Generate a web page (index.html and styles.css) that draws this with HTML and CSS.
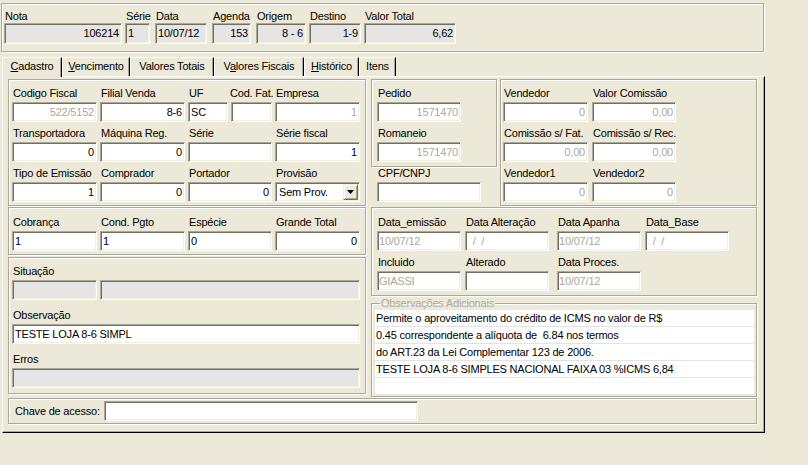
FILE: index.html
```html
<!DOCTYPE html>
<html>
<head>
<meta charset="utf-8">
<title>Nota</title>
<link rel="stylesheet" href="styles.css">
</head>
<body>
<div class="hdr">
  <div class="hf hw-nota"><div class="lbl">Nota</div><div class="inp hinp gray r">106214</div></div>
  <div class="hf hw-serie"><div class="lbl">Série</div><div class="inp hinp gray">1</div></div>
  <div class="hf hw-data"><div class="lbl">Data</div><div class="inp hinp gray">10/07/12</div></div>
  <div class="hf hw-agenda"><div class="lbl">Agenda</div><div class="inp hinp gray r">153</div></div>
  <div class="hf hw-origem"><div class="lbl">Origem</div><div class="inp hinp gray r">8 - 6</div></div>
  <div class="hf hw-destino"><div class="lbl">Destino</div><div class="inp hinp gray r">1-9</div></div>
  <div class="hf hw-valor"><div class="lbl">Valor Total</div><div class="inp hinp gray r">6,62</div></div>
</div>

<div class="tabs">
  <div class="tab sel t-cad"><u>C</u>adastro</div>
  <div class="tab t-ven"><u>V</u>encimento</div>
  <div class="tab t-vt">Valores Totais</div>
  <div class="tab t-vf">V<u>a</u>lores Fiscais</div>
  <div class="tab t-his"><u>H</u>istórico</div>
  <div class="tab t-itens">Itens</div>
</div>

<div class="panel">
  <div class="cols">
    <div class="lcol">
      <div class="grp ga">
        <div class="g4">
          <div class="f"><div class="lbl">Codigo Fiscal</div><div class="inp dis r">522/5152</div></div>
          <div class="f"><div class="lbl">Filial Venda</div><div class="inp r">8-6</div></div>
          <div class="split">
            <div class="f"><div class="lbl">UF</div><div class="inp">SC</div></div>
            <div class="f"><div class="lbl lbl-fat">Cod. Fat.</div><div class="inp"></div></div>
          </div>
          <div class="f"><div class="lbl">Empresa</div><div class="inp dis r">1</div></div>

          <div class="f"><div class="lbl">Transportadora</div><div class="inp r">0</div></div>
          <div class="f"><div class="lbl">Máquina Reg.</div><div class="inp r">0</div></div>
          <div class="f"><div class="lbl">Série</div><div class="inp"></div></div>
          <div class="f"><div class="lbl">Série fiscal</div><div class="inp r">1</div></div>

          <div class="f"><div class="lbl">Tipo de Emissão</div><div class="inp r">1</div></div>
          <div class="f"><div class="lbl">Comprador</div><div class="inp r">0</div></div>
          <div class="f"><div class="lbl">Portador</div><div class="inp r">0</div></div>
          <div class="f"><div class="lbl">Provisão</div>
            <div class="inp combo"><span class="ctext">Sem Prov.</span><span class="cbtn"><svg width="7" height="4" viewBox="0 0 7 4"><polygon points="0,0 7,0 3.5,4" fill="#000"/></svg></span></div>
          </div>
        </div>
      </div>

      <div class="grp gb">
        <div class="g4">
          <div class="f"><div class="lbl">Cobrança</div><div class="inp">1</div></div>
          <div class="f"><div class="lbl">Cond. Pgto</div><div class="inp">1</div></div>
          <div class="f"><div class="lbl">Espécie</div><div class="inp">0</div></div>
          <div class="f"><div class="lbl">Grande Total</div><div class="inp r">0</div></div>
        </div>
      </div>

      <div class="grp gc">
        <div class="f"><div class="lbl">Situação</div>
          <div class="sit"><div class="inp gray"></div><div class="inp gray"></div></div>
        </div>
        <div class="f mt9"><div class="lbl">Observação</div><div class="inp">TESTE LOJA 8-6 SIMPL</div></div>
        <div class="f mt9"><div class="lbl">Erros</div><div class="inp gray"></div></div>
      </div>
    </div>

    <div class="rcol">
      <div class="rtop">
        <div class="dcol">
          <div class="grp gd">
            <div class="f"><div class="lbl">Pedido</div><div class="inp dis r">1571470</div></div>
            <div class="f mt5"><div class="lbl">Romaneio</div><div class="inp dis r">1571470</div></div>
          </div>
          <div class="f cpf"><div class="lbl">CPF/CNPJ</div><div class="inp"></div></div>
        </div>
        <div class="grp ge">
          <div class="g2">
            <div class="f"><div class="lbl">Vendedor</div><div class="inp dis r">0</div></div>
            <div class="f"><div class="lbl">Valor Comissão</div><div class="inp dis r">0,00</div></div>
            <div class="f"><div class="lbl">Comissão s/ Fat.</div><div class="inp dis r">0,00</div></div>
            <div class="f"><div class="lbl">Comissão s/ Rec.</div><div class="inp dis r">0,00</div></div>
            <div class="f"><div class="lbl">Vendedor1</div><div class="inp dis r">0</div></div>
            <div class="f"><div class="lbl">Vendedor2</div><div class="inp dis r">0</div></div>
          </div>
        </div>
      </div>

      <div class="grp gf">
        <div class="gdates">
          <div class="f"><div class="lbl">Data_emissão</div><div class="inp dis dt">10/07/12</div></div>
          <div class="f"><div class="lbl">Data Alteração</div><div class="inp dis dt">&nbsp;&nbsp;/&nbsp;&nbsp;/</div></div>
          <div class="f"><div class="lbl">Data Apanha</div><div class="inp dis dt">10/07/12</div></div>
          <div class="f"><div class="lbl">Data_Base</div><div class="inp dis dt">&nbsp;&nbsp;/&nbsp;&nbsp;/</div></div>
          <div class="f"><div class="lbl">Incluido</div><div class="inp dis dt">GIASSI</div></div>
          <div class="f"><div class="lbl">Alterado</div><div class="inp"></div></div>
          <div class="f"><div class="lbl">Data Proces.</div><div class="inp dis dt">10/07/12</div></div>
        </div>
      </div>

      <fieldset class="gg">
        <legend>Observações Adicionais</legend>
        <div class="memo">
          <div class="mrow">Permite o aproveitamento do crédito de ICMS no valor de R$</div>
          <div class="mrow">0.45 correspondente a alíquota de&nbsp; 6.84 nos termos</div>
          <div class="mrow">do ART.23 da Lei Complementar 123 de 2006.</div>
          <div class="mrow">TESTE LOJA 8-6 SIMPLES NACIONAL FAIXA 03 %ICMS 6,84</div>
          <div class="mrow"></div>
        </div>
      </fieldset>
    </div>
  </div>

  <div class="grp chave">
    <div class="clbl">Chave de acesso:</div>
    <div class="inp cinp"></div>
  </div>
</div>
</body>
</html>
```

FILE: styles.css
```css
* { box-sizing: border-box; }
html, body { margin: 0; padding: 0; background: #ECE9D8; }
body {
  width: 808px;
  height: 465px;
  overflow: hidden;
  font-family: "Liberation Sans", Arial, sans-serif;
  font-size: 11px;
  letter-spacing: -0.2px;
  color: #000;
}

/* generic */
.lbl { height: 13px; line-height: 13px; padding-left: 1px; white-space: nowrap; }
.f { display: flex; flex-direction: column; }
.f > .inp { margin-top: 2px; }
.inp {
  height: 20px;
  line-height: 18px;
  background: #fff;
  border: 1px solid;
  border-color: #ACA899 #fff #fff #ACA899;
  box-shadow: inset 1px 1px #716F64, inset -1px -1px #F1EFE2;
  padding: 0 2px;
  white-space: nowrap;
  overflow: hidden;
}
.inp.r { text-align: right; }
.inp.gray { background: #E5E5E5; }
.inp.dis { color: #ACA899; }
.inp.dt { padding-left: 1px; }

.grp {
  border: 1px solid #ACA899;
  box-shadow: inset 1px 1px #fff, 1px 1px 0 #fff;
}

/* header */
.hdr {
  margin: 3px 0 0 1px;
  width: 763px;
  height: 49px;
  display: flex;
  padding: 6px 0 0 2px;
  border: 1px solid #ACA899;
  box-shadow: inset 1px 1px #fff, 1px 1px 0 #fff;
}
.hf { display: flex; flex-direction: column; }
.hinp { height: 21px; line-height: 19px; }
.hw-nota { width: 118px; }
.hw-serie { width: 25px; margin-left: 3px; }
.hw-data { width: 52px; margin-left: 5px; }
.hw-agenda { width: 39px; margin-left: 5px; }
.hw-origem { width: 50px; margin-left: 5px; }
.hw-destino { width: 52px; margin-left: 3px; }
.hw-valor { width: 92px; margin-left: 3px; }

/* tabs */
.tabs { display: flex; margin: 5px 0 0 2px; height: 19px; }
.tab {
  height: 19px;
  line-height: 17px;
  text-align: center;
  white-space: nowrap;
  border-top: 1px solid #fff;
  border-left: 1px solid #fff;
  border-right: 1px solid #000;
  box-shadow: inset -1px 0 #ACA899;
}
.tab.sel { height: 20px; margin-bottom: -1px; position: relative; z-index: 1; background: #ECE9D8; }
.t-cad { width: 60px; }
.t-ven { width: 68px; }
.t-vt { width: 84px; }
.t-vf { width: 90px; }
.t-his { width: 55px; }
.t-itens { width: 37px; }

/* panel */
.panel {
  margin-left: 2px;
  width: 763px;
  height: 357px;
  border-top: 1px solid #fff;
  border-left: 1px solid #fff;
  border-right: 1px solid #000;
  border-bottom: 1px solid #000;
  box-shadow: inset -1px -1px #ACA899;
  padding: 2px 0 0 5px;
}
.cols { display: flex; gap: 5px; height: 318px; }
.lcol { width: 358px; display: flex; flex-direction: column; }
.rcol { width: 386px; display: flex; flex-direction: column; }

.g4 {
  display: grid;
  grid-template-columns: 85px 85px 84px 85px;
  column-gap: 3px;
  row-gap: 5px;
}
.split { display: grid; grid-template-columns: 40px 41px; column-gap: 3px; }
.lbl-fat { margin-left: -2px; }

.ga { height: 127px; padding: 7px 0 0 3px; }
.gb { height: 48px; margin-top: 1px; padding: 8px 0 0 3px; }
.gc { height: 137px; margin-top: 2px; padding: 7px 0 0 3px; }
.sit { display: grid; grid-template-columns: 85px 260px; column-gap: 3px; margin-top: 2px; }
.sit .inp { margin: 0; }
.gc > .f > .inp { width: 348px; }
.mt9 { margin-top: 9px; }
.mt5 { margin-top: 5px; }

/* combo */
.combo { display: flex; align-items: center; padding: 1px 1px 1px 3px; }
.ctext { flex: 1; line-height: 16px; }
.cbtn {
  width: 15px;
  height: 16px;
  background: #ECE9D8;
  border: 1px solid;
  border-color: #F1EFE2 #716F64 #716F64 #F1EFE2;
  box-shadow: inset 1px 1px #fff, inset -1px -1px #ACA899;
  display: flex;
  align-items: center;
  justify-content: center;
}
.cbtn svg { display: block; }

/* right column */
.rtop { display: flex; gap: 3px; }
.dcol { width: 126px; display: flex; flex-direction: column; }
.gd { height: 88px; padding: 7px 0 0 5px; }
.gd .inp { width: 84px; }
.cpf { padding-left: 6px; }
.cpf .inp { width: 104px; }
.ge { width: 257px; height: 127px; padding: 7px 0 0 2px; }
.g2 {
  display: grid;
  grid-template-columns: 85px 84px;
  column-gap: 4px;
  row-gap: 5px;
}
.gf { height: 89px; margin-top: 1px; padding: 8px 0 0 5px; }
.gdates {
  display: grid;
  grid-template-columns: 84px 88px 84px 84px;
  column-gap: 4px;
  row-gap: 5px;
}
.gdates .f { width: 84px; }

fieldset.gg {
  margin: 1px 0 0 0;
  min-width: 0;
  height: 100px;
  padding: 0 2px 1px 3px;
  border: 1px solid #ACA899;
  box-shadow: inset 1px 1px #fff, 1px 1px 0 #fff;
}
fieldset.gg legend {
  margin-left: 5px;
  padding: 0 1px;
  height: 13px;
  line-height: 13px;
  color: #ACA899;
}
.memo { background: #fff; }
.mrow {
  height: 17px;
  line-height: 16px;
  border-bottom: 1px solid #E3E3E3;
  padding-left: 1px;
  white-space: nowrap;
  overflow: hidden;
}

/* chave */
.chave {
  width: 749px;
  height: 26px;
  margin-top: 1px;
  display: flex;
  align-items: center;
  padding-left: 6px;
}
.clbl { width: 89px; white-space: nowrap; }
.cinp { width: 314px; height: 20px; }
```
